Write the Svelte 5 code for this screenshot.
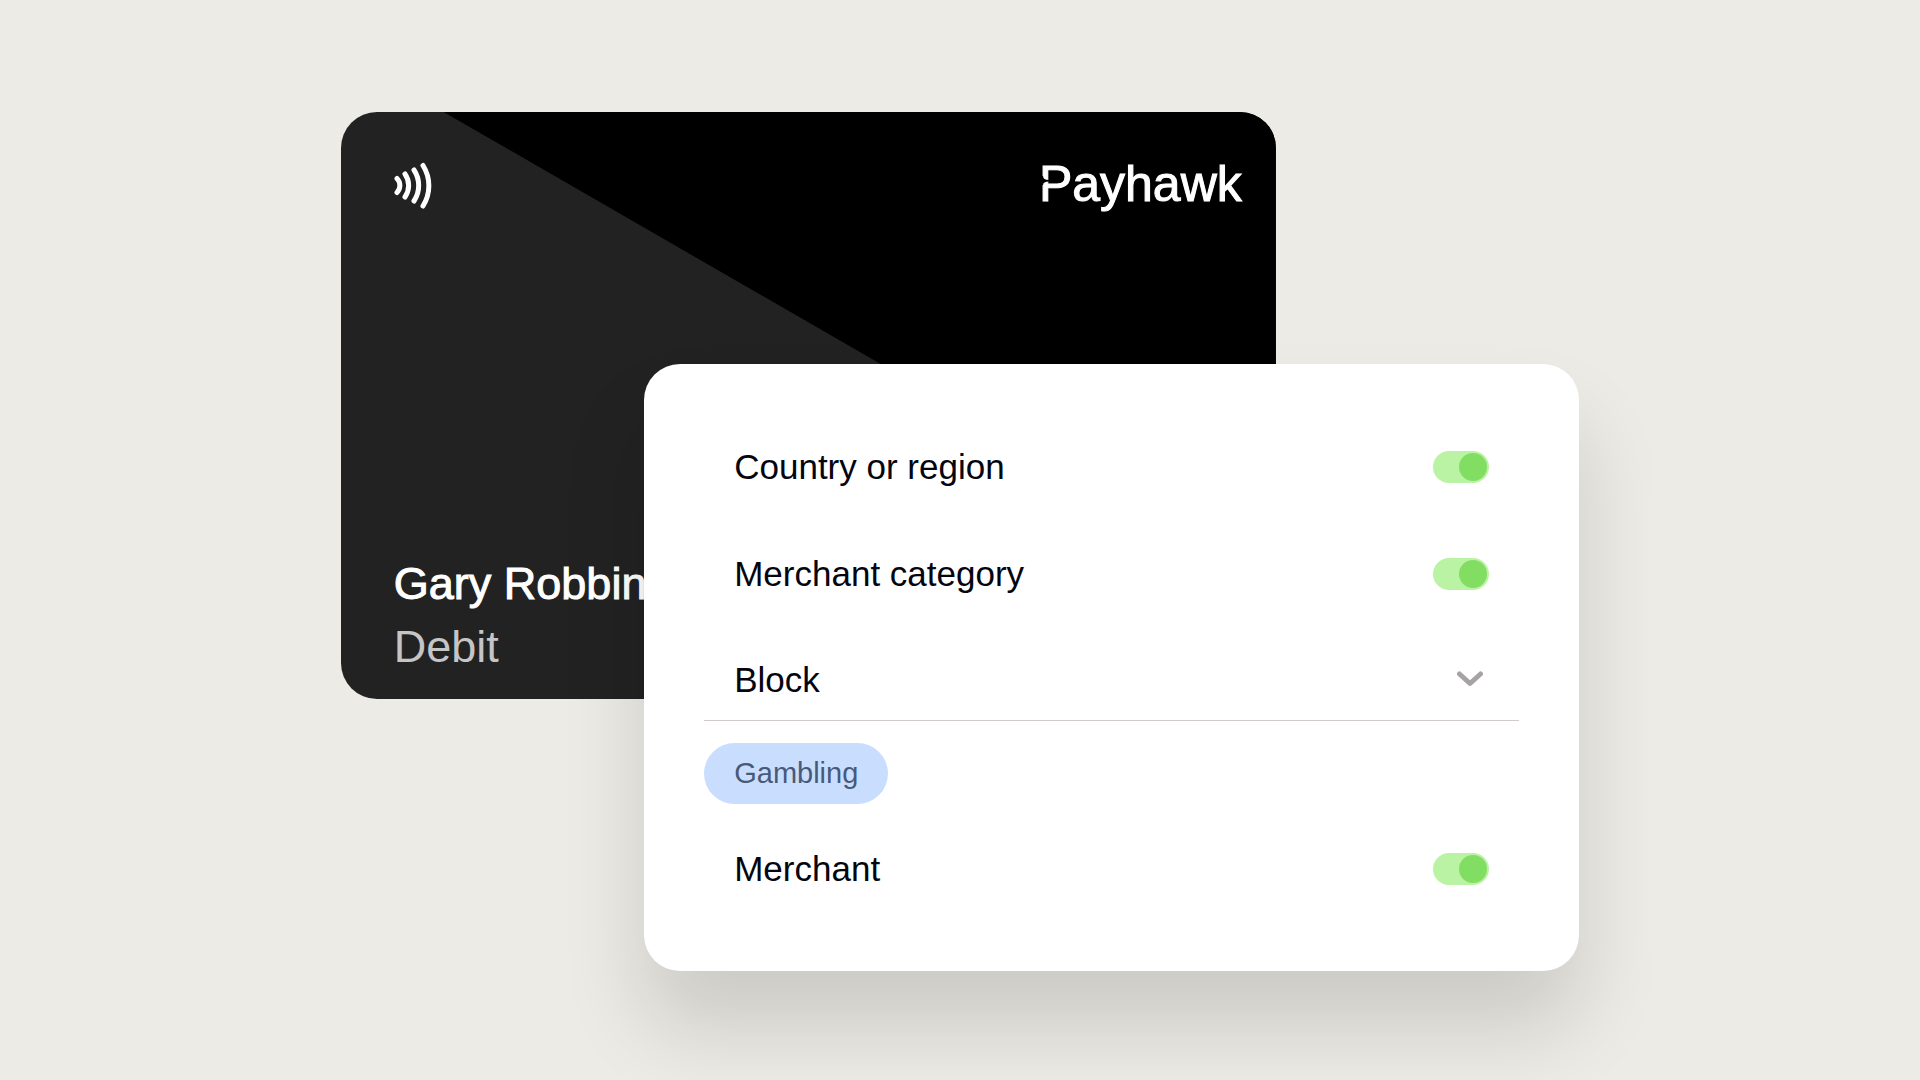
<script lang="ts">
  let country = $state(true);
  let category = $state(true);
  let merchant = $state(true);
  let rule = $state('block');
</script>

<main>
  <div class="stack">
    <!-- Payment card -->
    <section class="card" aria-label="Debit card">
      <header>
        <svg class="contactless" viewBox="0 0 38 48" aria-hidden="true">
          <path d="M3 16.5a10 10 0 0 1 0 14" />
          <path d="M11 12a20 20 0 0 1 0 23" />
          <path d="M20 8a28 28 0 0 1 0 31" />
          <path d="M29 3.5a38 38 0 0 1 0 40.5" />
        </svg>
        <span class="brand">
          Payhawk
          <svg class="notch" viewBox="0 0 8 10" aria-hidden="true">
            <path d="M0 0H1Q1 4 7 4V5.5Q1 5.5 1 9H0Z" />
          </svg>
        </span>
      </header>
      <div class="holder">
        <span class="name">Gary Robbin</span>
        <span class="type">Debit</span>
      </div>
    </section>

    <!-- Spending controls -->
    <form class="panel">
      <label class="row">
        Country or region
        <input type="checkbox" role="switch" bind:checked={country} />
      </label>
      <label class="row">
        Merchant category
        <input type="checkbox" role="switch" bind:checked={category} />
      </label>
      <div class="picker">
        <select aria-label="Merchant category rule" bind:value={rule}>
          <option value="block">Block</option>
        </select>
        <svg class="chevron" viewBox="0 0 26 16" aria-hidden="true">
          <path d="M2.5 3 13 12.5 23.5 3" />
        </svg>
      </div>
      <span class="tag">Gambling</span>
      <label class="row">
        Merchant
        <input type="checkbox" role="switch" bind:checked={merchant} />
      </label>
    </form>
  </div>
</main>

<style>
  :global(body) {
    background: #ecebe5;
  }

  main {
    box-sizing: border-box;
    min-height: 100vh;
    padding-top: 112px;
    overflow: hidden;
    font-family: "Liberation Sans", Arial, sans-serif;
  }

  .stack {
    display: grid;
    width: 64.5%;
    margin: 0 auto;
    align-items: start;
  }

  .card,
  .panel {
    grid-area: 1 / 1;
    box-sizing: border-box;
    width: 75.5%;
    border-radius: 36px;
  }

  /* Payment card */
  .card {
    display: flex;
    flex-direction: column;
    justify-content: space-between;
    position: relative;
    aspect-ratio: 936 / 588;
    padding: 50px 34px 21px 53px;
    overflow: hidden;
    background: #222;
    color: #fff;
  }
  .card::before {
    content: '';
    position: absolute;
    inset: 0;
    background: #000;
    clip-path: polygon(11% 0, 100% 0, 100% 81.7%);
  }

  header {
    display: flex;
    justify-content: space-between;
    align-items: flex-start;
    position: relative;
  }

  .contactless {
    width: 38px;
    height: 48px;
    fill: none;
    stroke: #fff;
    stroke-width: 5;
    stroke-linecap: round;
  }

  .brand {
    position: relative;
    font-size: 50px;
    line-height: 44px;
    -webkit-text-stroke: 1px #fff;
  }
  .notch {
    position: absolute;
    top: 14px;
    left: 3px;
    width: 8px;
    height: 10px;
    fill: #000;
  }

  .holder {
    display: flex;
    flex-direction: column;
    position: relative;
    font-size: 45px;
    line-height: 63px;
    white-space: nowrap;
  }
  .name { -webkit-text-stroke: 1px #fff; }
  .type { color: #c6c5c5; }

  /* Spending controls */
  .panel {
    display: flex;
    flex-direction: column;
    position: relative;
    justify-self: end;
    margin-top: 252px;
    padding: 49px 60px;
    background: #fff;
    box-shadow: 0 56px 84px rgba(0, 0, 0, 0.14);
    color: #04050f;
    font-size: 35px;
  }

  .row {
    display: flex;
    align-items: center;
    justify-content: space-between;
    height: 107px;
    padding: 0 30px;
  }

  input {
    appearance: none;
    display: flex;
    align-items: center;
    box-sizing: border-box;
    width: 56px;
    height: 32px;
    margin: 0;
    padding: 0 2px;
    border-radius: 16px;
    background: #dcdcd8;
    cursor: pointer;
  }
  input::before {
    content: '';
    width: 28px;
    height: 28px;
    border-radius: 50%;
    background: #a8a3a3;
  }
  input:checked {
    justify-content: flex-end;
    background: #baf3a4;
  }
  input:checked::before { background: #82de62; }

  .picker {
    display: grid;
    align-items: center;
    border-bottom: 1px solid #d0cbc9;
  }
  select {
    grid-area: 1 / 1;
    appearance: none;
    height: 93px;
    padding: 12px 30px 0;
    border: none;
    background: none;
    color: inherit;
    font: inherit;
    cursor: pointer;
  }
  .chevron {
    grid-area: 1 / 1;
    justify-self: end;
    width: 26px;
    height: 16px;
    margin: 10px 36px 0;
    fill: none;
    stroke: #a8a3a3;
    stroke-width: 5;
    stroke-linecap: round;
    stroke-linejoin: round;
    pointer-events: none;
  }

  .tag {
    align-self: flex-start;
    margin: 22px 0 11px;
    padding: 0 30px;
    border-radius: 31px;
    background: #c9deff;
    color: #475a7a;
    font-size: 29px;
    line-height: 61px;
  }
</style>
